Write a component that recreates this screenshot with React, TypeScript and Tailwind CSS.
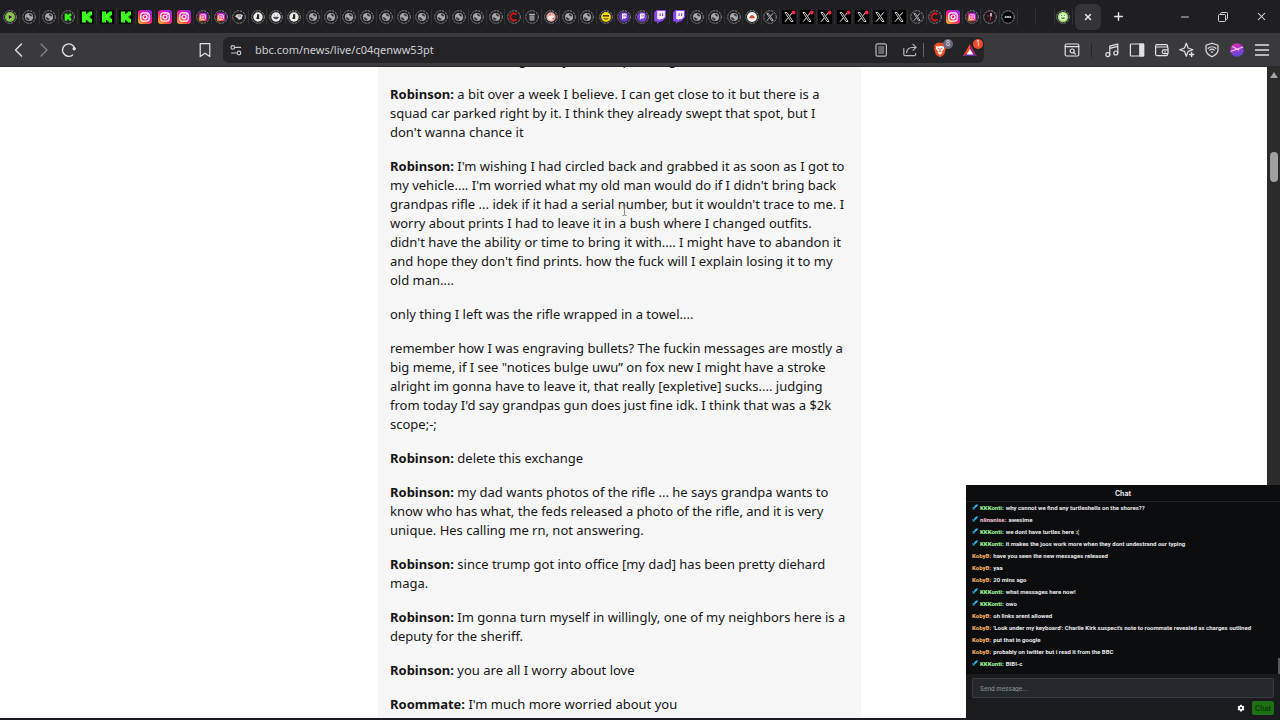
import type { ReactElement, ReactNode } from "react";
import { Minus, Plus, X } from "lucide-react";

type TabKind =
  | "play" | "globe" | "kickSmall" | "kick" | "insta" | "instaSmall" | "bird" | "round" | "smile"
  | "redC" | "bin" | "pink" | "yellow" | "purple" | "twitchSmall" | "twitch" | "reddish"
  | "xSmall" | "xDot" | "x" | "dark" | "dots" | "empty" | "green";

const pinnedTabs: TabKind[] = [
  "play", "globe", "globe", "kickSmall", "kick", "kick", "kick", "insta", "insta", "insta",
];

const openTabs: TabKind[] = [
  "instaSmall", "instaSmall", "bird", "round", "smile", "round", "globe",
  "globe", "globe", "globe", "globe", "globe", "globe", "globe", "globe", "globe", "globe",
  "redC", "bin", "pink", "globe", "globe", "yellow", "purple", "twitchSmall", "twitch", "twitch",
  "globe", "globe", "globe", "reddish", "xSmall", "xDot", "xDot", "xDot", "xDot", "xDot", "x", "x",
  "xSmall", "redC", "insta", "instaSmall", "dark", "dots", "empty", "empty", "green",
];

const kickPath = "M2 1.5h4v2.5h1.3V2.7h1.3V1.5H12v3.8h-1.3v1.3H9.4v.8h1.3v1.3H12v3.8H8.6v-1.2H7.3V10H6v2.5H2Z";
const twitchPath = "M3.5 0 1.2 2.4v9.2h3V14l2.4-2.4h2.2L13 7.4V0Z";

type Message = { user: string; text: string; color: string; badge?: boolean };

const green = "text-[#93eb93]";
const orange = "text-[#eaa759]";

const messages: Message[] = [
  { user: "KKKonti", text: "why cannot we find any turtleshells on the shores??", color: green, badge: true },
  { user: "niinanise", text: "awesime", color: "text-[#e3b5c8]", badge: true },
  { user: "KKKonti", text: "we dont have turtles here :(", color: green, badge: true },
  { user: "KKKonti", text: "it makes the joos work more when they dont undestrand our typing", color: green, badge: true },
  { user: "KobyB", text: "have you seen the new messages released", color: orange },
  { user: "KobyB", text: "yaa", color: orange },
  { user: "KobyB", text: "20 mins ago", color: orange },
  { user: "KKKonti", text: "what messages here now!", color: green, badge: true },
  { user: "KKKonti", text: "owo", color: green, badge: true },
  { user: "KobyB", text: "oh links arent allowed", color: orange },
  { user: "KobyB", text: "'Look under my keyboard': Charlie Kirk suspect's note to roommate revealed as charges outlined", color: orange },
  { user: "KobyB", text: "put that in google", color: orange },
  { user: "KobyB", text: "probably on twitter but i read it from the BBC", color: orange },
  { user: "KKKonti", text: "BIBI-c", color: green, badge: true },
];

type Paragraph = { speaker?: string; lines: string[] };

const article: Paragraph[] = [
  { speaker: "Roommate", lines: ["How long have you been planning this?"] },
  {
    speaker: "Robinson",
    lines: [
      "a bit over a week I believe. I can get close to it but there is a",
      "squad car parked right by it. I think they already swept that spot, but I",
      "don't wanna chance it",
    ],
  },
  {
    speaker: "Robinson",
    lines: [
      "I'm wishing I had circled back and grabbed it as soon as I got to",
      "my vehicle.... I'm worried what my old man would do if I didn't bring back",
      "grandpas rifle ... idek if it had a serial number, but it wouldn't trace to me. I",
      "worry about prints I had to leave it in a bush where I changed outfits.",
      "didn't have the ability or time to bring it with.... I might have to abandon it",
      "and hope they don't find prints. how the fuck will I explain losing it to my",
      "old man....",
    ],
  },
  { lines: ["only thing I left was the rifle wrapped in a towel...."] },
  {
    lines: [
      "remember how I was engraving bullets? The fuckin messages are mostly a",
      "big meme, if I see \"notices bulge uwu” on fox new I might have a stroke",
      "alright im gonna have to leave it, that really [expletive] sucks.... judging",
      "from today I'd say grandpas gun does just fine idk. I think that was a $2k",
      "scope;-;",
    ],
  },
  { speaker: "Robinson", lines: ["delete this exchange"] },
  {
    speaker: "Robinson",
    lines: [
      "my dad wants photos of the rifle ... he says grandpa wants to",
      "know who has what, the feds released a photo of the rifle, and it is very",
      "unique. Hes calling me rn, not answering.",
    ],
  },
  { speaker: "Robinson", lines: ["since trump got into office [my dad] has been pretty diehard", "maga."] },
  { speaker: "Robinson", lines: ["Im gonna turn myself in willingly, one of my neighbors here is a", "deputy for the sheriff."] },
  { speaker: "Robinson", lines: ["you are all I worry about love"] },
  { speaker: "Roommate", lines: ["I'm much more worried about you"] },
];

function Ring({ children }: { children?: ReactNode }): ReactElement {
  return (
    <>
      <circle cx="7" cy="7" r="6.3" fill="none" stroke="#85858a" strokeWidth="1" strokeDasharray="2.4 0.9" />
      {children}
    </>
  );
}

function XMark(): ReactElement {
  return (
    <g fill="none" stroke="#e4e4e4">
      <path d="M3 2.5h2l6 9H9Z" strokeWidth="0.9" />
      <path d="M10.8 2.3 7.8 5.8M6.2 8 3 11.7" strokeWidth="1" />
    </g>
  );
}

function Insta(): ReactElement {
  return (
    <>
      <rect x="0" y="0" width="14" height="14" rx="3" fill="url(#insta)" />
      <g fill="none" stroke="#fff" strokeWidth="1.2">
        <rect x="2.8" y="2.8" width="8.4" height="8.4" rx="2.4" />
        <circle cx="7" cy="7" r="2" />
      </g>
      <circle cx="9.4" cy="4.6" r="0.6" fill="#fff" />
    </>
  );
}

function Favicon({ kind }: { kind: TabKind }): ReactElement {
  const marks: Record<TabKind, ReactNode> = {
    play: <Ring><circle cx="7" cy="7" r="5" fill="#7cc33f" /><path d="M5.3 4.2 10 7l-4.7 2.8Z" fill="#1f1f23" stroke="#d8f0c0" strokeWidth="0.6" /></Ring>,
    globe: <Ring><circle cx="7" cy="7" r="4.1" fill="#a6a6aa" /><path d="M7.2 3.6q-1 1.3.2 1.8l1.2.9 1.9.1Q10 4 7.2 3.6ZM3.6 7.2l2.2.2.9 1.1 1 .6-.6 1.3Q4 10.2 3.6 7.2Z" fill="#39393e" /></Ring>,
    kickSmall: <Ring><g transform="translate(2.4 2.4) scale(0.66)"><path d={kickPath} fill="#39f51c" /></g></Ring>,
    kick: <><rect width="14" height="14" fill="#050805" /><path d={kickPath} fill="#3dfb1e" /></>,
    insta: <Insta />,
    instaSmall: <Ring><g transform="translate(2.8 2.8) scale(0.6)"><Insta /></g></Ring>,
    bird: <Ring><path d="M3 6.2 5 4.2h4.6L11.2 6l-1.4.8.2 2L7 10 5.6 8.2Z" fill="#d3d0d1" /><path d="M6 6h3" stroke="#754147" strokeWidth="0.8" /></Ring>,
    round: <Ring><circle cx="7" cy="7" r="4.7" fill="#efede5" /><path d="M6 4.2h2.2v4.9H5.5V7.2H6Z" fill="#242424" /></Ring>,
    smile: <Ring><circle cx="7" cy="7" r="4.7" fill="#eee" /><path d="M4.5 7.2h5c-.5 2.2-4.5 2.2-5 0M5 5h1M8 5h1" fill="#333" stroke="#333" strokeWidth="0.6" /></Ring>,
    redC: <Ring><path d="M9.6 4.6a3.6 3.6 0 1 0 0 4.8" fill="none" stroke="#c8141b" strokeWidth="2.1" /></Ring>,
    bin: <Ring><path d="M4 3.8h6v1.2H4ZM4.6 5.6h4.8v4.8H4.6Z" fill="#a5b0ae" /><path d="M6 6v4M8 6v4" stroke="#4c5552" strokeWidth="0.7" /></Ring>,
    pink: <Ring><circle cx="7" cy="7" r="4.7" fill="#efa9a0" /><path d="m3.6 8.6 2.2-4.2 4.4 1.6-2.4 4.6Z" fill="#fdf2ee" /><path d="M5 5h2M8.4 8.4h1.6" stroke="#d04a58" strokeWidth="0.9" /></Ring>,
    yellow: <Ring><circle cx="7" cy="7" r="4.9" fill="#f2d71c" /><path d="M4 5.2h6v1.3H4Z" fill="#262005" /><path d="M4.8 8.6q2.2 1.2 4.4 0" fill="none" stroke="#262005" strokeWidth="0.8" /></Ring>,
    purple: <Ring><circle cx="7" cy="7" r="5" fill="#6b35cf" /><path d="M5 3.6h4.6v3.6L8.2 8.4H6.4L5 9.8Z" fill="#f4edff" /><path d="M7 4.8v1.8M8.6 4.8v1.8" stroke="#6b35cf" strokeWidth="0.7" /></Ring>,
    twitchSmall: <Ring><circle cx="7" cy="7" r="5" fill="#7a42d8" /><path d="M5 3.6h4.6v3.6L8.2 8.4H6.4L5 9.8Z" fill="#f4edff" /><path d="M7 4.8v1.8M8.6 4.8v1.8" stroke="#7a42d8" strokeWidth="0.7" /></Ring>,
    twitch: <><path d={twitchPath} fill="#8c45ef" /><path d="M4.2 1.1h7.7v5.7L9.7 8.9H7.4L5.8 10.4V8.9H4.2Z" fill="#f4f0fb" /><path d="M7.1 3.2v2.7M9.6 3.2v2.7" stroke="#8040e4" strokeWidth="1.1" /></>,
    reddish: <Ring><circle cx="7" cy="7" r="5" fill="#f4f2ef" /><path d="m4 8.3 1.6-2.5L7 4.8l1.7 1.2L10 8.3Z" fill="#d5432f" /></Ring>,
    xSmall: <Ring><g transform="translate(1.4 1.4) scale(0.8)"><XMark /></g></Ring>,
    xDot: <><rect width="14" height="14" fill="#000" /><XMark /><circle cx="11.6" cy="2.4" r="2" fill="#f0284d" /></>,
    x: <><rect width="14" height="14" fill="#000" /><XMark /></>,
    dark: <Ring><circle cx="7" cy="7" r="4.6" fill="#2a1219" /><path d="M8 3v3.4" stroke="#e0d2d6" strokeWidth="1.6" /><path d="M4 6h2.5M7.4 7v3.6" stroke="#a83a52" strokeWidth="1" /></Ring>,
    dots: <Ring><circle cx="7" cy="7" r="5.2" fill="#000" /><path d="M3.8 7h6.4" stroke="#fff" strokeWidth="1.4" strokeDasharray="1.8 .5" /></Ring>,
    empty: null,
    green: <Ring><circle cx="7" cy="7" r="5.2" fill="#97e063" /><circle cx="7" cy="7" r="3.7" fill="#e2fbd0" /><path d="M4.8 7.4h4.4c-.5 2.1-3.9 2.1-4.4 0Z" fill="#4d9638" /><path d="M5 5.4h1.2M7.8 5.4H9" stroke="#39702a" strokeWidth="0.8" /></Ring>,
  };
  return (
    <svg viewBox="0 0 14 14" className="size-3.5 shrink-0" aria-hidden="true">
      {marks[kind]}
    </svg>
  );
}

function Tabs({ tabs, className }: { tabs: TabKind[]; className: string }): ReactElement {
  return (
    <div className={`flex h-4 ${className}`}>
      {tabs.map((kind, i) => (
        <button key={i} aria-label={`Tab ${kind}`} className="flex min-w-0 flex-1 basis-0 items-center justify-center border-r border-[#303034]">
          <Favicon kind={kind} />
        </button>
      ))}
    </div>
  );
}

function ToolButton({ label, className = "", children }: { label: string; className?: string; children: ReactNode }): ReactElement {
  return (
    <button aria-label={label} className={`flex h-6 w-[25px] shrink-0 items-center justify-center ${className}`}>
      <svg viewBox="0 0 16 16" className="size-4 overflow-visible" fill="none" stroke="currentColor" strokeWidth="1.2" strokeLinejoin="round" strokeLinecap="round" aria-hidden="true">
        {children}
      </svg>
    </button>
  );
}

function TabStrip(): ReactElement {
  return (
    <div className="flex h-[33px] shrink-0 items-center bg-[#1f1f23] pl-px">
      <Tabs tabs={pinnedTabs} className="w-[193px] shrink-0" />
      <Tabs tabs={openTabs} className="min-w-0 flex-1" />
      <div className="flex w-[207px] shrink-0 items-center text-[#e6e6e8]">
        <button aria-label="Close tab" className="ml-0.5 flex h-[26px] w-[26px] items-center justify-center rounded-md bg-[#343438]">
          <X size={10} strokeWidth={3.5} />
        </button>
        <button aria-label="New tab" className="ml-2 flex size-[18px] items-center justify-center">
          <Plus size={13} strokeWidth={2.6} />
        </button>
        <div className="ml-auto flex items-center">
          <button aria-label="Minimize" className="flex w-[38px] justify-center"><Minus size={12} strokeWidth={1.8} /></button>
          <button aria-label="Restore" className="flex w-[38px] justify-center">
            <svg viewBox="0 0 10 10" className="size-2.5 overflow-visible" fill="none" stroke="currentColor" strokeWidth="0.9">
              <rect x="0.5" y="2.5" width="7" height="7" rx="1" />
              <path d="M2.7 2.3V1.5q0-1 1-1h4.8q1 0 1 1v4.8q0 1-1 1h-.8" />
            </svg>
          </button>
          <button aria-label="Close window" className="flex w-[38px] justify-center"><X size={13} strokeWidth={1.9} /></button>
        </div>
      </div>
    </div>
  );
}

function Toolbar(): ReactElement {
  return (
    <div className="flex h-[34px] shrink-0 items-center border-b border-[#29292c] bg-[#3a3a3e] text-[#e2e2e4]">
      <div className="flex w-[223px] shrink-0 items-center px-1.5">
        <ToolButton label="Back"><path d="m10.5 2-6 6 6 6" strokeWidth="1.4" /></ToolButton>
        <ToolButton label="Forward" className="text-[#88888c]"><path d="m5 2 6 6-6 6" /></ToolButton>
        <ToolButton label="Reload">
          <path d="M11.6 13a6.2 6.2 0 1 1 2.2-6.2" strokeWidth="1.4" />
          <circle cx="13.2" cy="6.8" r="1.7" fill="currentColor" stroke="none" />
        </ToolButton>
        <ToolButton label="Bookmark" className="ml-auto"><path d="M3.2 1.6h9.6v13L8 11.2l-4.8 3.4Z" /></ToolButton>
      </div>

      <div className="flex h-[26px] min-w-0 flex-1 items-center rounded-md bg-[#242428]">
        <ToolButton label="Site settings" className="text-[#c8c8cc]">
          <path d="M7 5.4h5.6M3.4 11h5" />
          <circle cx="4.8" cy="5.4" r="1.8" />
          <circle cx="11" cy="11" r="1.8" />
        </ToolButton>
        <input
          aria-label="Address"
          defaultValue="bbc.com/news/live/c04qenww53pt"
          className="ml-[7px] min-w-0 flex-1 bg-transparent font-['Noto_Sans',sans-serif] text-[11px] leading-4 text-[#cfcfd2] outline-none"
        />
        <ToolButton label="Reader mode" className="text-[#b8b8bc]">
          <rect x="3" y="1.8" width="10.4" height="12.4" rx="1.5" />
          <path d="M5.6 5h5.2M5.6 7h5.2M5.6 9h5.2M5.6 11h5.2" strokeWidth="0.9" />
        </ToolButton>
        <ToolButton label="Share" className="ml-1 text-[#b8b8bc]">
          <path d="M1.8 6.5v6q0 1.2 1.2 1.2h9.4q1.2 0 1.2-1.2v-1M4.6 10.6c.4-3.3 2.6-5 5.4-5.1h4M11 2.4l3.2 3-3.2 3" />
        </ToolButton>
        <span className="ml-px h-3.5 w-px bg-[#66666a]" />
        <button aria-label="Brave shields" className="relative ml-[7px] flex size-[18px] items-center justify-center">
          <svg viewBox="0 0 14 16" className="h-4 w-3.5">
            <path d="m3 1.5 1.7-.8h4.6l1.7.8 2 2-.5 2 .5 1-1.8 6L7 15.5 2.8 12.5 1 6.5l.5-1-.5-2Z" fill="#f04d22" />
            <path d="M3.2 4 5 4.4 7 4l2-.1 1.8.5.3 2.3-2 2.5.4 1.5L7 13l-2.4-2.3L5 9.2 3 7Z" fill="#fff" />
            <path d="m4.4 6 1.7 1M9.6 6 7.9 7M7 6.5V9M5.4 9.8 7 9l1.6.8" stroke="#e24a22" strokeWidth="0.9" fill="none" />
          </svg>
          <span className="absolute -right-1 -top-0.5 flex size-2.5 items-center justify-center rounded-full bg-[#68687a] font-['Inter',sans-serif] text-[7px] leading-none text-[#e5e5ec]">8</span>
        </button>
        <button aria-label="Rewards" className="relative ml-3 mr-[5px] flex size-[18px] items-center justify-center">
          <svg viewBox="0 0 16 14" className="h-3.5 w-4">
            <path d="M8 1 1 13h7Z" fill="#ff4724" />
            <path d="M8 1 15 13H8Z" fill="#9e1f63" />
            <path d="M1 13h14l-4-3H5Z" fill="#662d91" />
            <path d="m8 6-3.4 5.5h6.8Z" fill="#fff" />
          </svg>
          <span className="absolute -right-1 -top-0.5 flex size-2.5 items-center justify-center rounded-full bg-[#ed4b32] font-['Inter',sans-serif] text-[7px] leading-none text-white">1</span>
        </button>
      </div>

      <div className="flex w-[296px] shrink-0 items-center justify-end pr-1.5">
        <ToolButton label="Search tabs">
          <rect x="1.2" y="2" width="13.6" height="12" rx="1.2" />
          <path d="M1.2 4.6h13.6M9.8 10.6l1.5 1.4" />
          <circle cx="8.2" cy="9" r="2" />
        </ToolButton>
        <span className="mx-[7px] h-3.5 w-px bg-[#262629]" />
        <ToolButton label="Media">
          <path d="M5.8 12.4V4.2l8-2v8.6M5.8 6.3l8-2" />
          <circle cx="3.8" cy="12.6" r="2" />
          <circle cx="11.8" cy="11" r="2" />
        </ToolButton>
        <ToolButton label="Sidebar">
          <rect x="1.4" y="2" width="13.2" height="12" rx="0.8" />
          <path d="M10.8 2h3.8v12h-3.8Z" fill="currentColor" />
        </ToolButton>
        <ToolButton label="Wallet">
          <path d="M13.5 5V3.6q0-1-1-1H3q-1.4 0-1.4 1.3v8.2Q1.6 13.6 3 13.6h9.5q1 0 1-1v-1M1.8 5h11q1.2 0 1.2 1v5.6H10a1.6 1.6 0 0 1-1.7-1.7V9.4A1.6 1.6 0 0 1 10 7.8h4M10.8 9.8h.6" />
        </ToolButton>
        <ToolButton label="Leo">
          <path d="M7.3 1.2 9.1 6l4.8 1.7-4.8 1.7-1.8 4.8-1.8-4.8L.7 7.7 5.5 6Z" />
          <path d="M12.6 10.6v4M10.6 12.6h4" strokeWidth="1.5" />
        </ToolButton>
        <ToolButton label="VPN">
          <path d="M8 1.2 14 3.3v4.5c0 3.2-2.4 5.4-6 7-3.6-1.6-6-3.8-6-7V3.3Z" />
          <path d="M4.2 6.3c2.2-1.8 5.4-1.8 7.6 0M5.7 8.2c1.3-1.1 3.3-1.1 4.6 0M7.5 10.2h1" />
        </ToolButton>
        <button aria-label="Profile" className="flex h-6 w-[25px] shrink-0 items-center justify-center">
          <svg viewBox="0 0 16 16" className="size-4">
            <circle cx="8" cy="8" r="6.8" fill="url(#profile)" />
            <path d="M1.5 9.4 14.2 5M3.3 4.5l6.8 3.8" stroke="#f3c5e9" strokeWidth="1.1" />
          </svg>
        </button>
        <ToolButton label="Menu"><path d="M1.5 3h13M1.5 8h13M1.5 13h13" strokeWidth="1.4" /></ToolButton>
      </div>
    </div>
  );
}

function Article(): ReactElement {
  return (
    <main className="min-w-0 flex-1 overflow-hidden bg-white pr-7">
      <article className="mx-auto -mt-4 w-[483px] space-y-[15px] bg-[#f6f6f6] px-3 pb-4 font-['Noto_Sans',sans-serif] text-[13px] leading-[19px] text-[#161616]">
        {article.map((p, i) => (
          <p key={i} className="whitespace-nowrap">
            {p.speaker && <b>{p.speaker}: </b>}
            {p.lines.map((line, n) => (
              <span key={n}>
                {n > 0 && <br />}
                {line}
              </span>
            ))}
          </p>
        ))}
      </article>
    </main>
  );
}

function Chat(): ReactElement {
  return (
    <aside className="absolute bottom-0 right-0 flex w-[314px] flex-col bg-[#0b0d0f] font-['Roboto',sans-serif] text-[6px] text-[#e9e9ea]">
      <h2 className="h-[17px] border-b border-[#202326] text-center font-['Inter',sans-serif] text-[7px] font-bold leading-[17px]">Chat</h2>
      <div className="relative h-[172px]">
        <ul className="-mt-px px-1.5">
          {messages.map((m, i) => (
            <li key={i} className="flex h-3 items-center whitespace-nowrap font-bold">
              {m.badge && (
                <svg viewBox="0 0 6 6" className="mr-0.5 size-1.5" aria-hidden="true">
                  <path d="M5.8.2 5.5 2 2.8 4.5 1.5 3.2 4 .5ZM.7 3l2.3 2.3-.7.5L.2 3.7ZM.2 5.2l.8-.8.6.6-.8.8Z" fill="#2cb5e8" />
                </svg>
              )}
              <b className={m.color}>{m.user}:</b>
              <span className="ml-0.5">{m.text}</span>
            </li>
          ))}
        </ul>
        <span className="absolute bottom-0 right-0 h-4 w-0.5 bg-[#55585c]" />
      </div>
      <form className="bg-[#191b1e] px-1.5 pb-[5px] pt-1" onSubmit={(e) => e.preventDefault()}>
        <input
          aria-label="Send message"
          placeholder="Send message..."
          className="block h-5 w-full rounded-xs border border-[#393c40] bg-[#24272b] px-[7px] font-['Inter',sans-serif] text-[6px] font-medium outline-none placeholder:text-[#8c8e91]"
        />
        <div className="mt-[3px] flex h-3.5 items-center justify-end gap-[7px]">
          <button type="button" aria-label="Chat settings">
            <svg viewBox="0 0 8 8" className="size-2">
              <path fillRule="evenodd" d="M3.2.8h1.6l.2.9.7.4.9-.3.8 1.4-.7.6v.7l.7.6-.8 1.4-.9-.3-.7.4-.2.9H3.2L3 6.6l-.7-.4-.9.3L.6 5.1l.7-.6v-.7l-.7-.6.8-1.4.9.3.7-.4ZM4 3a1.1 1.1 0 1 0 0 2.2A1.1 1.1 0 0 0 4 3Z" fill="#fff" />
            </svg>
          </button>
          <button type="submit" className="h-3.5 w-[22px] rounded-xs bg-[#1d7111] text-center font-['Inter',sans-serif] text-[7px] font-semibold leading-none text-[#0c3a0a]">Chat</button>
        </div>
      </form>
    </aside>
  );
}

export default function App(): ReactElement {
  return (
    <div className="relative flex h-screen flex-col overflow-hidden bg-white">
      <svg className="absolute size-0" aria-hidden="true">
        <defs>
          <linearGradient id="insta" x1="0" y1="1" x2="0.8" y2="0">
            <stop offset="0" stopColor="#ffc22e" />
            <stop offset="0.35" stopColor="#fb4f3e" />
            <stop offset="0.6" stopColor="#ee16a0" />
            <stop offset="1" stopColor="#9c28e8" />
          </linearGradient>
          <linearGradient id="profile" x1="0" y1="0" x2="0.3" y2="1">
            <stop offset="0" stopColor="#e42a9a" />
            <stop offset="0.5" stopColor="#a936cf" />
            <stop offset="1" stopColor="#5b48d6" />
          </linearGradient>
        </defs>
      </svg>
      <TabStrip />
      <Toolbar />
      <div className="flex min-h-0 flex-1">
        <Article />
        {/* Page scrollbar */}
        <div className="flex w-[13px] shrink-0 flex-col items-center bg-[#2b2b2b] pt-[5px]">
          <svg viewBox="0 0 8 6" className="h-1.5 w-2"><path d="M4 0 8 6H0Z" fill="#a2a2a2" /></svg>
          <div className="mt-[74px] h-[30px] w-2 rounded-full bg-[#9f9f9f]" />
        </div>
      </div>
      <div className="h-0.5 shrink-0 bg-[#1d1b22]" />
      {/* Mouse cursor */}
      <svg viewBox="0 0 5 11" className="absolute left-[622px] top-[205px] h-[11px] w-[5px]" fill="none" stroke="#77736c" strokeWidth="0.8" aria-hidden="true">
        <path d="M.5.5h1.5l.5.5.5-.5h1.5M2.5 1v9M.5 10.5h1.5l.5-.5.5.5h1.5" />
      </svg>
      <Chat />
    </div>
  );
}
